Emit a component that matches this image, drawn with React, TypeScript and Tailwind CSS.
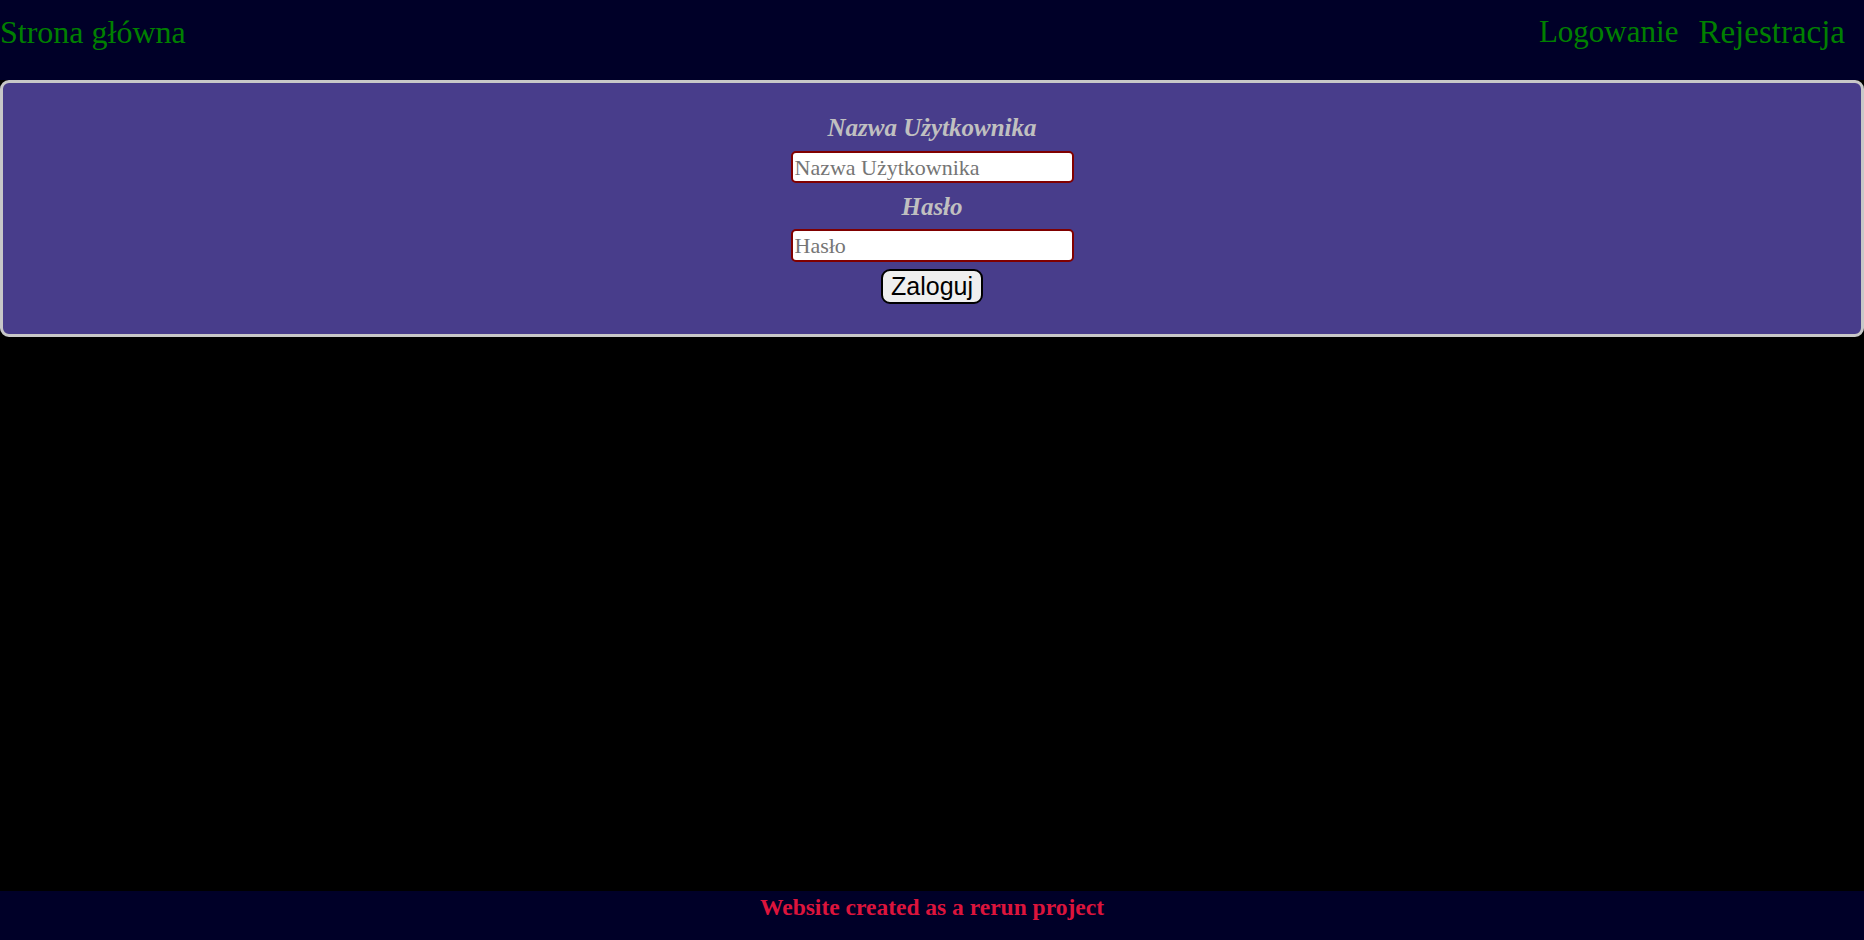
import React from "react";

const serif = "font-['Liberation_Serif','Times_New_Roman',serif]";

function Header() {
  return (
    <header className={`h-[80px] bg-[#000028] flex justify-between items-start pt-[12px] ${serif}`}>
      <a className="text-[32px] text-[#008000] leading-[40px]">Strona główna</a>
      <nav className="flex gap-[20px] pr-[19px]">
        <a className="text-[31px] text-[#008000] leading-[40px]">Logowanie</a>
        <a className="text-[33px] text-[#008000] leading-[40px]">Rejestracja</a>
      </nav>
    </header>
  );
}

function LoginForm() {
  return (
    <section className="h-[257px] bg-[#483d8b] border-[3px] border-[#c8c8c8] rounded-[9px] flex flex-col items-center pt-[31px]">
      <label className={`${serif} italic font-bold text-[25px] leading-[28px] text-[#c0c0c0]`}>
        Nazwa Użytkownika
      </label>
      <input
        placeholder="Nazwa Użytkownika"
        className={`${serif} mt-[9px] w-[283px] h-[32px] bg-white border-2 border-[#800000] rounded-[5px] px-[2px] text-[22px] placeholder:text-[#757575] outline-none`}
      />
      <label className={`${serif} italic font-bold text-[25px] leading-[28px] text-[#c0c0c0] mt-[10px]`}>
        Hasło
      </label>
      <input
        type="password"
        placeholder="Hasło"
        className={`${serif} mt-[8px] w-[283px] h-[33px] bg-white border-2 border-[#800000] rounded-[5px] px-[2px] text-[22px] placeholder:text-[#757575] outline-none`}
      />
      <button className="mt-[7px] h-[35px] px-[8px] bg-[#efefef] border-2 border-black rounded-[9px] font-['Liberation_Sans',Arial,sans-serif] text-[25px] leading-none text-black">
        Zaloguj
      </button>
    </section>
  );
}

export default function App() {
  return (
    <div className="min-h-screen bg-black flex flex-col">
      <Header />
      <LoginForm />
      <div className="flex-1" />
      <footer className={`h-[49px] bg-[#000028] text-center pt-[3px] ${serif}`}>
        <p className="text-[23.5px] font-bold text-[#dc143c] leading-[26px]">Website created as a rerun project</p>
      </footer>
    </div>
  );
}
